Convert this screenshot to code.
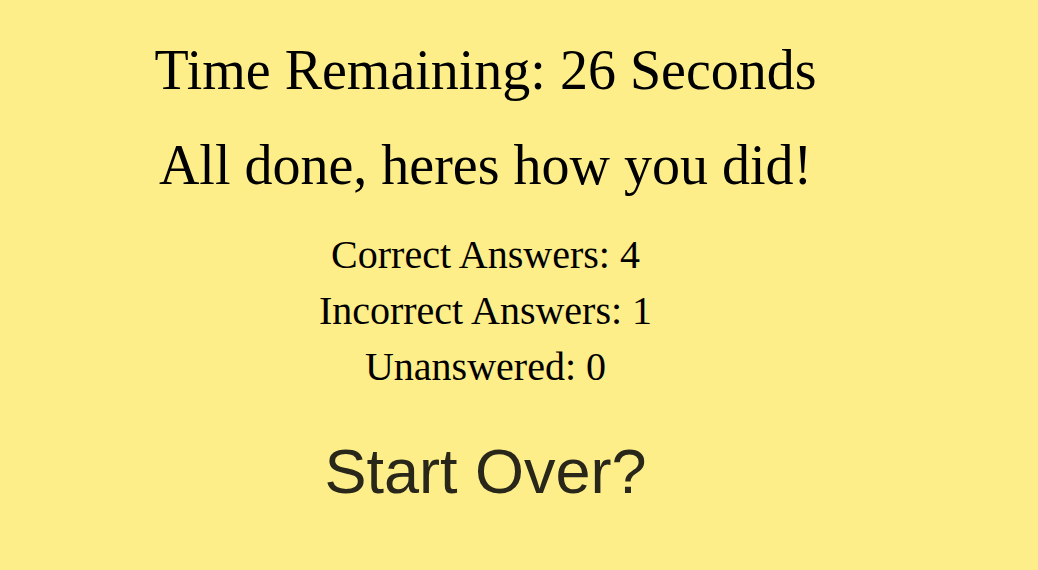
export default function App() {
  const results = [
    { label: 'Correct Answers', value: 4 },
    { label: 'Incorrect Answers', value: 1 },
    { label: 'Unanswered', value: 0 },
  ];

  return (
    <div className="min-h-[570px] w-full bg-[#fdee8a] text-black">
      <div className="w-[971px] pt-[38px] text-center font-['Liberation_Serif',serif]">
        <h1 className="text-[56px] leading-[64px] font-normal">Time Remaining: 26 Seconds</h1>
        <h2 className="mt-[31px] text-[56px] leading-[64px] font-normal">All done, heres how you did!</h2>
        <div className="mt-[30px]">
          {results.map((r) => (
            <p key={r.label} className="text-[40px] leading-[56px]">
              {r.label}: {r.value}
            </p>
          ))}
        </div>
        <button className="mt-[40px] font-['Liberation_Sans',Arial,sans-serif] text-[63px] leading-[72px] text-[#29261a]">
          Start Over?
        </button>
      </div>
    </div>
  );
}
